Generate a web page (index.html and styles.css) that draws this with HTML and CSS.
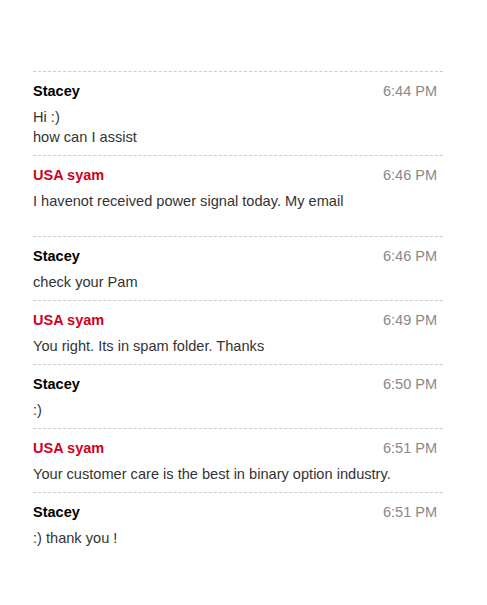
FILE: index.html
```html
<!DOCTYPE html>
<html lang="en">

<head>
    <meta charset="UTF-8">
    <meta name="viewport" content="width=device-width, initial-scale=1.0">
    <title>Chat Transcript</title>
    <link rel="stylesheet" href="styles.css">
</head>

<body>
    <div id="transcript">
        <div class="message">
            <div class="messageHead">
                <span class="author">Stacey</span>
                <span class="time">6:44 PM</span>
            </div>
            <div class="messageText">Hi :)<br>how can I assist</div>
        </div>
        <div class="message visitor">
            <div class="messageHead">
                <span class="author">USA syam</span>
                <span class="time">6:46 PM</span>
            </div>
            <div class="messageText trailing">I havenot received power signal today. My email</div>
        </div>
        <div class="message">
            <div class="messageHead">
                <span class="author">Stacey</span>
                <span class="time">6:46 PM</span>
            </div>
            <div class="messageText">check your Pam</div>
        </div>
        <div class="message visitor">
            <div class="messageHead">
                <span class="author">USA syam</span>
                <span class="time">6:49 PM</span>
            </div>
            <div class="messageText">You right. Its in spam folder. Thanks</div>
        </div>
        <div class="message">
            <div class="messageHead">
                <span class="author">Stacey</span>
                <span class="time">6:50 PM</span>
            </div>
            <div class="messageText">:)</div>
        </div>
        <div class="message visitor">
            <div class="messageHead">
                <span class="author">USA syam</span>
                <span class="time">6:51 PM</span>
            </div>
            <div class="messageText">Your customer care is the best in binary option industry.</div>
        </div>
        <div class="message">
            <div class="messageHead">
                <span class="author">Stacey</span>
                <span class="time">6:51 PM</span>
            </div>
            <div class="messageText">:) thank you !</div>
        </div>
    </div>
</body>

</html>
```

FILE: styles.css
```css
body {
    font-family: "Liberation Sans", Arial, sans-serif;
    margin: 0;
    padding: 0;
    background-color: #fff;
}

#transcript {
    width: 410px;
    margin: 71px 0 0 33px;
}

.message {
    border-top: 1px dashed #ccc;
    padding: 9px 0 8px;
}

.messageHead {
    display: flex;
    justify-content: space-between;
    align-items: center;
    line-height: 20px;
    padding-right: 6px;
}

.author {
    font-size: 14.5px;
    font-weight: bold;
    color: #000;
}

.visitor .author {
    color: #d0021b;
}

.time {
    font-size: 14.5px;
    color: #888;
}

.messageText {
    margin-top: 6px;
    font-size: 14.6px;
    line-height: 20px;
    color: #333;
}

.messageText.trailing {
    padding-bottom: 17px;
}
```
